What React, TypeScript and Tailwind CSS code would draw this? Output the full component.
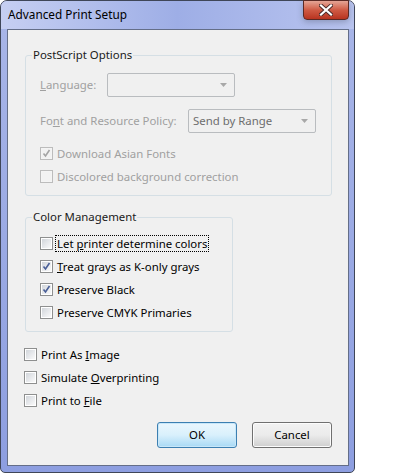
import React from 'react'

type BoxProps = { checked?: boolean; disabled?: boolean }

function CheckBox({ checked, disabled }: BoxProps) {
  return (
    <span
      className={
        'relative flex h-[13px] w-[13px] shrink-0 items-center justify-center border ' +
        (disabled ? 'border-[#bcbcbc] bg-[#f4f4f4]' : 'border-[#8e8f8f] bg-white')
      }
    >
      <span
        className={
          'h-[9px] w-[9px] ' +
          (disabled
            ? 'bg-[#f2f2f2]'
            : 'bg-gradient-to-br from-[#d2d6db] via-[#e6e8eb] to-[#fafafa]')
        }
      />
      {checked && (
        <svg className="absolute left-[1px] top-[1px]" width="9" height="9" viewBox="0 0 9 9">
          <path
            d="M1.5 4.5 L3.5 7 L7.5 1"
            fill="none"
            stroke={disabled ? '#a4a4a4' : '#4a5f97'}
            strokeWidth="1.6"
          />
        </svg>
      )}
    </span>
  )
}

function CheckRow({
  children,
  checked,
  disabled,
  focused,
}: {
  children: React.ReactNode
  checked?: boolean
  disabled?: boolean
  focused?: boolean
}) {
  return (
    <div className="flex h-[23px] items-center">
      <CheckBox checked={checked} disabled={disabled} />
      <span
        className={
          'ml-[2px] px-[1px] leading-[15px] border ' +
          (focused ? 'border-dotted border-black' : 'border-transparent') +
          (disabled ? ' text-[#a0a0a0]' : ' text-black')
        }
      >
        {children}
      </span>
    </div>
  )
}

function ComboBox({ text, width }: { text?: string; width: string }) {
  return (
    <div
      className={
        'flex h-[24px] items-center justify-between rounded-[2px] border border-[#b9bcbf] bg-[#f0f0f0] pl-[4px] pr-[7px] ' +
        width
      }
    >
      <span className="text-[#6d6d6d]">{text}</span>
      <svg width="7" height="4" viewBox="0 0 7 4">
        <path d="M0 0 H7 L3.5 4 Z" fill="#a8a8a8" />
      </svg>
    </div>
  )
}

function GroupBox({
  title,
  width,
  children,
}: {
  title: string
  width: string
  children: React.ReactNode
}) {
  return (
    <div className={'relative rounded-[3px] border border-[#d5dfe5] ' + width}>
      <span className="absolute -top-[9px] left-[6px] bg-[#f0f0f0] px-[1px] leading-[16px] text-[#1a1a1a]">
        {title}
      </span>
      {children}
    </div>
  )
}

export default function App() {
  return (
    <div className="h-[473px] w-[420px] bg-white font-['Segoe_UI','Noto_Sans',sans-serif] text-[11.4px]">
      <div className="flex h-[473px] w-[355px] flex-col rounded-t-[7px] rounded-b-[5px] border border-[#3f4658] bg-gradient-to-b from-[#a9b6e8] to-[#8d9ee0]">
        {/* Title bar */}
        <div className="relative flex h-[28px] shrink-0 items-center rounded-t-[6px] bg-gradient-to-r from-[#c6cff2] via-[#9eaee6] to-[#b9c4ef] pl-[7px]">
          <span className="text-[11.8px] text-black">Advanced Print Setup</span>
          <div className="absolute right-[5px] -top-[1px] flex h-[20px] w-[46px] items-center justify-center rounded-b-[4px] border border-[#5b2a25] bg-gradient-to-b from-[#e4a596] via-[#cf5a44] to-[#b8331f] shadow-[0_2px_6px_rgba(60,70,90,0.35)]">
            <svg width="14" height="12" viewBox="0 0 14 12">
              <path
                d="M2 1.5 L12 10.5 M12 1.5 L2 10.5"
                stroke="#4a2a28"
                strokeWidth="4"
                strokeLinecap="square"
              />
              <path
                d="M2 1.5 L12 10.5 M12 1.5 L2 10.5"
                stroke="#ffffff"
                strokeWidth="2.2"
                strokeLinecap="square"
              />
            </svg>
          </div>
        </div>

        {/* Client area */}
        <div className="ml-[6px] mr-[5px] flex h-[437px] flex-col border border-[#646e88] bg-[#f0f0f0]">
          <div className="ml-[17px] mt-[25px]">
            <GroupBox title="PostScript Options" width="w-[307px]">
              <div className="pb-[7px] pl-[14px] pt-[17px]">
                <div className="flex h-[24px] items-center">
                  <span className="w-[67px] text-[#a0a0a0]">
                    <u>L</u>anguage:
                  </span>
                  <ComboBox width="w-[128px]" />
                </div>
                <div className="mt-[12px] flex h-[24px] items-center">
                  <span className="w-[148px] text-[#a0a0a0]">
                    Fo<u>n</u>t and Resource Policy:
                  </span>
                  <ComboBox width="w-[128px]" text="Send by Range" />
                </div>
                <div className="mt-[9px]">
                  <CheckRow checked disabled>
                    Download Asian Fonts
                  </CheckRow>
                  <CheckRow disabled>Discolored background correction</CheckRow>
                </div>
              </div>
            </GroupBox>
          </div>

          <div className="ml-[17px] mt-[21px]">
            <GroupBox title="Color Management" width="w-[208px]">
              <div className="pb-[7px] pl-[14px] pt-[14px]">
                <CheckRow focused>
                  Let <u>p</u>rinter determine colors
                </CheckRow>
                <CheckRow checked>
                  <u>T</u>reat grays as K-only grays
                </CheckRow>
                <CheckRow checked>Preserve Black</CheckRow>
                <CheckRow>Preserve CMYK Primaries</CheckRow>
              </div>
            </GroupBox>
          </div>

          <div className="ml-[16px] mt-[11px]">
            <CheckRow>
              Print As <u>I</u>mage
            </CheckRow>
            <CheckRow>
              Simulate <u>O</u>verprinting
            </CheckRow>
            <CheckRow>
              Print to <u>F</u>ile
            </CheckRow>
          </div>

          <div className="mt-[10px] flex justify-end gap-[15px] pr-[16px]">
            <button className="h-[26px] w-[80px] rounded-[3px] border border-[#3c7fb1] bg-gradient-to-b from-[#eaf6fd] via-[#d9f0fc] to-[#a7d9f5] text-black shadow-[inset_0_0_0_1px_#c8e7f9]">
              OK
            </button>
            <button className="h-[26px] w-[80px] rounded-[3px] border border-[#707070] bg-gradient-to-b from-[#f2f2f2] via-[#ebebeb] to-[#cfcfcf] text-black shadow-[inset_0_0_0_1px_#fcfcfc]">
              Cancel
            </button>
          </div>
        </div>
      </div>
    </div>
  )
}
